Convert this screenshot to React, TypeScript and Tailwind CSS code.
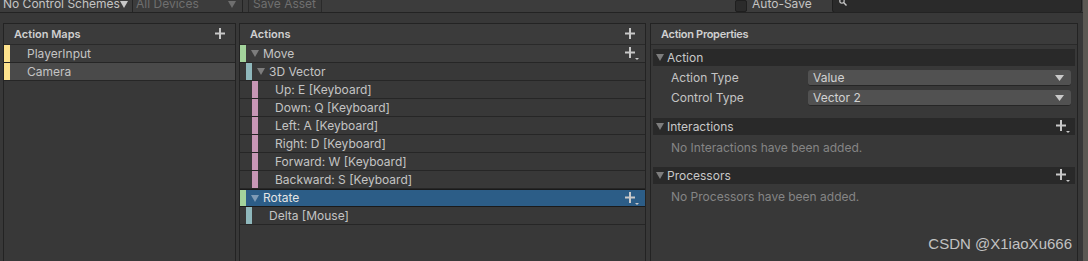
import React from "react";

const Plus = ({ menu = false }: { menu?: boolean }) => (
  <svg width="14" height="13" viewBox="0 0 14 13" className="shrink-0">
    <path d="M5 0v11M0 5.5h10" stroke="#c8c8c8" strokeWidth="2" />
    {menu && <path d="M10 11h4l-2 2z" fill="#c8c8c8" />}
  </svg>
);

const Tri = ({ color = "#7d7d7d" }: { color?: string }) => (
  <svg width="8" height="7" viewBox="0 0 8 7" className="shrink-0">
    <path d="M0 0h8l-4 7z" fill={color} />
  </svg>
);

const Strip = ({ color }: { color: string }) => (
  <div className="w-[6px] h-full shrink-0" style={{ backgroundColor: color }} />
);

const GREEN = "#a3d39c";
const CYAN = "#8fb8bc";
const PINK = "#c897b6";

const bindings = [
  "Up: E [Keyboard]",
  "Down: Q [Keyboard]",
  "Left: A [Keyboard]",
  "Right: D [Keyboard]",
  "Forward: W [Keyboard]",
  "Backward: S [Keyboard]",
];

const Dropdown = ({ value }: { value: string }) => (
  <div className="w-[263px] h-[16px] bg-[#515151] rounded-[3px] border-b border-[#262626] flex items-center justify-between pl-[5px] pr-[7px] text-[#d2d2d2]">
    <span>{value}</span>
    <svg width="9" height="6" viewBox="0 0 9 6">
      <path d="M0 0h9l-4.5 6z" fill="#c8c8c8" />
    </svg>
  </div>
);

const Foldout = ({ label, plus = false }: { label: string; plus?: boolean }) => (
  <div className="h-[17px] bg-[#292929] flex items-center pl-[3px] pr-[5px]">
    <Tri />
    <span className="ml-[3px] text-[#c8c8c8]">{label}</span>
    <div className="flex-1" />
    {plus && <Plus menu />}
  </div>
);

export default function App() {
  return (
    <div
      className="relative w-[1088px] h-[261px] overflow-hidden bg-[#383838] text-[12px] text-[#c4c4c4] flex"
      style={{ fontFamily: "Inter, 'Noto Sans', sans-serif" }}
    >
      <div className="w-[1083px] flex flex-col shrink-0">
        {/* toolbar */}
        <div className="h-[13px] overflow-hidden bg-[#3c3c3c] border-b border-[#232323] shrink-0">
          <div className="-mt-[5px] h-[18px] flex items-center whitespace-nowrap">
            <div className="w-[133px] flex items-center pl-[3px] border-r border-[#242424] h-full">
              <span>No Control Schemes</span>
              <Tri color="#c8c8c8" />
            </div>
            <div className="w-[110px] flex items-center pl-[3px] pr-[6px] justify-between border-r border-[#242424] h-full text-[#6f6f6f]">
              <span>All Devices</span>
              <Tri color="#6f6f6f" />
            </div>
            <div className="ml-[5px] w-[74px] h-full border border-[#2a2a2a] bg-[#3a3a3a] flex items-center pl-[4px] text-[#6f6f6f]">
              Save Asset
            </div>
            <div className="ml-[413px] w-[12px] h-[12px] mt-[3px] rounded-[2px] bg-[#2b2b2b] border border-[#1f1f1f]" />
            <span className="ml-[5px]">Auto-Save</span>
            <div className="ml-[20px] w-[250px] h-full bg-[#2a2a2a] border border-[#1e1e1e] rounded-[3px] flex items-end pl-[6px] pb-[6px]">
              <svg width="8" height="8" viewBox="0 0 8 8">
                <circle cx="3" cy="3" r="2.2" stroke="#c8c8c8" strokeWidth="1.2" fill="none" />
                <path d="M4.6 4.6L7.5 7.5" stroke="#c8c8c8" strokeWidth="1.4" />
              </svg>
            </div>
          </div>
        </div>

        {/* panels */}
        <div className="flex-1 flex pt-[10px] pl-[3px] gap-[3px]">
          {/* Action Maps */}
          <div className="w-[233px] border-t border-l border-r border-[#232323] flex flex-col">
            <div className="h-[21px] bg-[#3b3b3b] border-b border-[#2a2a2a] flex items-center pl-[10px] pr-[6px] justify-between">
              <span className="font-semibold text-[11px] text-[#d0d0d0]">Action Maps</span>
              <Plus />
            </div>
            <div className="h-[18px] bg-[#3c3c3c] border-b border-[#262626] flex items-center">
              <Strip color="#fde28c" />
              <span className="ml-[17px]">PlayerInput</span>
            </div>
            <div className="h-[18px] bg-[#4a4a4a] border-b border-[#262626] flex items-center">
              <Strip color="#fde28c" />
              <span className="ml-[17px]">Camera</span>
            </div>
          </div>

          {/* Actions */}
          <div className="w-[407px] border-t border-l border-r border-[#232323] flex flex-col">
            <div className="h-[21px] bg-[#3b3b3b] border-b border-[#2a2a2a] flex items-center pl-[10px] pr-[6px] justify-between">
              <span className="font-semibold text-[11px] text-[#d0d0d0]">Actions</span>
              <Plus />
            </div>
            <div className="h-[18px] bg-[#3c3c3c] border-b border-[#262626] flex items-center pr-[6px]">
              <Strip color={GREEN} />
              <div className="ml-[5px]"><Tri /></div>
              <span className="ml-[4px]">Move</span>
              <div className="flex-1" />
              <Plus menu />
            </div>
            <div className="h-[18px] border-b border-[#262626] flex items-center">
              <div className="w-[6px]" />
              <Strip color={CYAN} />
              <div className="ml-[5px]"><Tri /></div>
              <span className="ml-[4px]">3D Vector</span>
            </div>
            {bindings.map((b) => (
              <div key={b} className="h-[18px] border-b border-[#262626] flex items-center">
                <div className="w-[12px]" />
                <Strip color={PINK} />
                <span className="ml-[17px]">{b}</span>
              </div>
            ))}
            <div className="h-[18px] bg-[#2c5d87] border-y border-[#1a1a1a] flex items-center pr-[6px]">
              <Strip color={GREEN} />
              <div className="ml-[5px]"><Tri color="#7f9bb5" /></div>
              <span className="ml-[4px] text-[#e4e4e4]">Rotate</span>
              <div className="flex-1" />
              <Plus menu />
            </div>
            <div className="h-[18px] border-b border-[#262626] flex items-center">
              <div className="w-[6px]" />
              <Strip color={CYAN} />
              <span className="ml-[17px]">Delta [Mouse]</span>
            </div>
          </div>

          {/* Action Properties */}
          <div className="ml-[1px] w-[428px] border-t border-l border-r border-[#232323] flex flex-col">
            <div className="h-[21px] bg-[#3b3b3b] border-b border-[#2a2a2a] flex items-center pl-[10px]">
              <span className="font-semibold text-[11px] tracking-[-0.3px] text-[#d0d0d0]">Action Properties</span>
            </div>
            <div className="pl-[2px] pr-[2px] pt-[4px] flex flex-col">
              <Foldout label="Action" />
              <div className="mt-[3px] h-[18px] flex items-center pl-[18px]">
                <span className="w-[137px]">Action Type</span>
                <Dropdown value="Value" />
              </div>
              <div className="mt-[2px] h-[18px] flex items-center pl-[18px]">
                <span className="w-[137px]">Control Type</span>
                <Dropdown value="Vector 2" />
              </div>
              <div className="mt-[11px]">
                <Foldout label="Interactions" plus />
              </div>
              <div className="h-[26px] flex items-center pl-[18px] text-[#858585]">
                No Interactions have been added.
              </div>
              <div className="mt-[6px]">
                <Foldout label="Processors" plus />
              </div>
              <div className="h-[26px] flex items-center pl-[18px] text-[#858585]">
                No Processors have been added.
              </div>
            </div>
          </div>
        </div>
      </div>
      <div className="flex-1 bg-[#5b5853]" />

      <div
        className="absolute right-[16px] bottom-[6px] text-[15px] text-[#c2c2c2]"
        style={{ fontFamily: "'Liberation Sans', Arial, sans-serif" }}
      >
        CSDN @X1iaoXu666
      </div>
    </div>
  );
}
